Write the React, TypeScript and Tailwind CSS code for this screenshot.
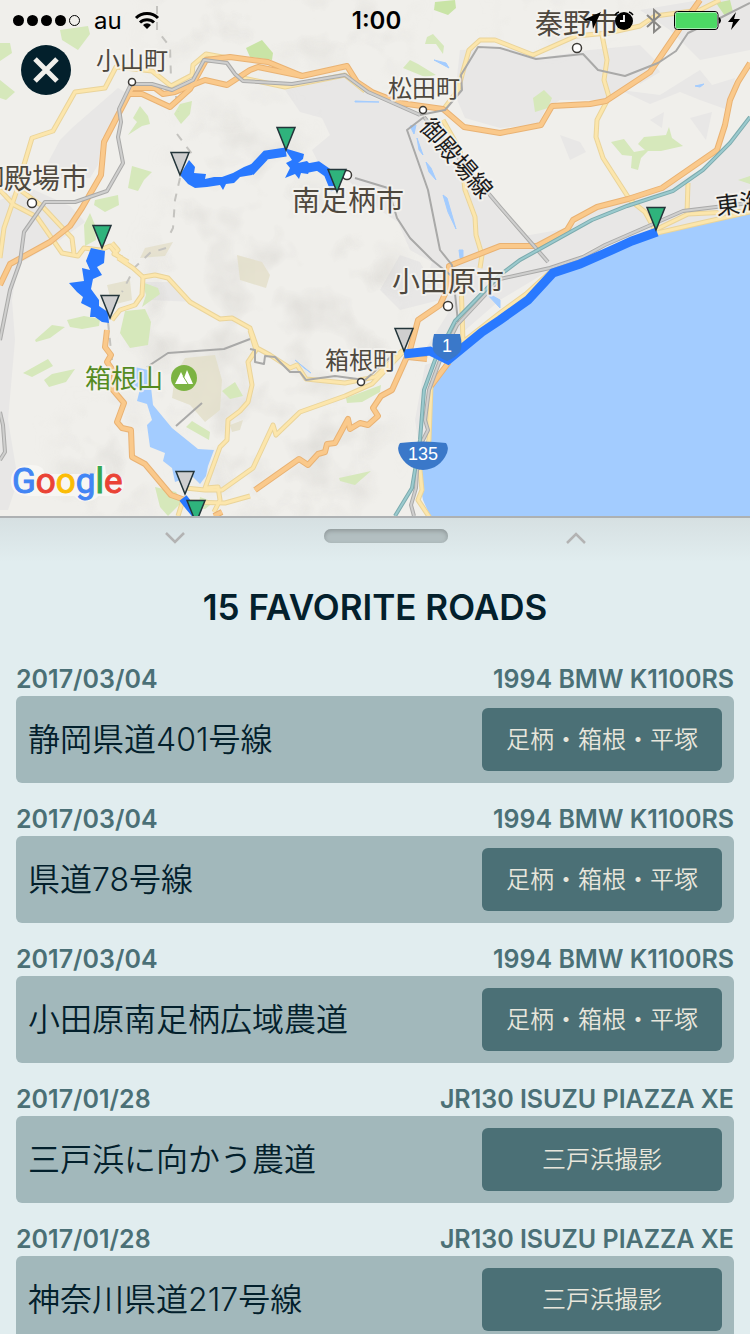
import { useState } from "react";

const roads = [
    { id: 1, date: "2017/03/04", vehicle: "1994 BMW K1100RS", name: "静岡県道401号線", trip: "足柄・箱根・平塚" },
    { id: 2, date: "2017/03/04", vehicle: "1994 BMW K1100RS", name: "県道78号線", trip: "足柄・箱根・平塚" },
    { id: 3, date: "2017/03/04", vehicle: "1994 BMW K1100RS", name: "小田原南足柄広域農道", trip: "足柄・箱根・平塚" },
    { id: 4, date: "2017/01/28", vehicle: "JR130 ISUZU PIAZZA XE", name: "三戸浜に向かう農道", trip: "三戸浜撮影" },
    { id: 5, date: "2017/01/28", vehicle: "JR130 ISUZU PIAZZA XE", name: "神奈川県道217号線", trip: "三戸浜撮影" },
];

const urban = [
    "M285 90 345 77 372 97 425 118 470 168 502 214 548 262 500 280 455 310 440 300 425 285 432 262 410 250 398 222 372 205 350 182 322 170 312 150 330 135 322 118 300 112z",
    "M118 88 130 95 122 112 102 138 98 165 90 178 60 178 44 170 60 140 72 128z",
    "M0 200 30 188 70 206 85 222 60 240 22 262 0 290z",
    "M0 260 18 262 12 300 15 340 8 420 18 480 8 510 0 510z",
    "M460 50 520 48 540 58 590 50 640 45 655 60 630 85 605 100 560 100 545 110 538 125 500 128 465 118 455 95z",
    "M620 90 660 95 700 70 712 85 735 78 728 110 700 100 680 92 650 104z",
    "M560 135 580 142 586 152 570 160z M650 120 664 112 662 128z M690 118 712 112 706 140z M630 62 650 58 660 72 640 84z",
    "M500 240 570 228 600 205 660 190 705 168 750 120 750 214 655 232 600 245 550 270 500 300 440 352 425 350 450 310z",
    "M195 302 150 300 145 282 168 282z M400 255 420 262 440 300 400 310 380 290z M425 365 440 360 428 420 420 450 415 420z",
    "M640 10 700 0 750 0 750 50 700 60 670 30z",
];

const greens = [
    "M60 30 88 26 90 34 78 50 62 40z M0 43 10 43 12 53 0 61z M0 80 15 92 6 100 0 98z",
    "M140 106 148 116 150 124 142 126 128 135 137 122 133 118z M180 104 192 101 190 114 181 124 174 114z",
    "M132 166 152 172 144 180 138 191 128 188z M95 200 118 195 119 205 105 212 94 205z M90 213 95 225 96 240 85 246 84 225z",
    "M427 37 433 34 444 46 443 54 436 44 425 44z",
    "M410 60 418 64 436 75 425 77 403 68z M533 98 544 90 552 98 548 108 535 112z",
    "M611 142 624 139 634 152 645 150 638 144 644 137 666 135 669 127 672 138 683 146 661 151 648 151 641 158 638 170 631 168 632 156 622 155z M738 180 750 176 750 184z",
    "M125 311 145 309 151 322 148 345 130 348 120 333z M67 320 84 316 100 319 99 326 82 329 70 327z M35 340 52 325 65 327 50 338 36 342z",
    "M23 373 48 359 53 366 32 377z M44 380 52 374 75 369 66 382 49 387z M142 282 158 288 160 294 142 307 146 295z",
    "M186 427 192 421 210 432 209 440z M222 391 235 382 243 396 230 399z M346 398 381 385 380 392 362 402 347 403z M339 478 371 471 355 485 340 481z",
    "M155 487 176 492 182 502 168 516 160 507z M200 497 214 502 205 509 198 508z",
];

const lake = "M130 366 148 370 151 387 153 405 172 428 198 449 214 450 208 466 206 476 200 484 192 476 175 482 172 468 163 461 165 453 150 447 147 425 152 420 147 404 137 401 140 389 130 386z";
const sea = "M750 213 657 234 603 256 553 277 530 302 500 324 448 362 431 386 430 436 421 456 419 480 423 500 430 516 750 516z";
const streams = "M410 126 416 125 414 134z M417 138 423 155 419 150z M426 162 431 168 436 180 429 172z M443 195 447 198 456 229 448 212z M434 60 446 63 449 68z M355 101 379 102 355 102z M459 250 463 250 463 260 460 258z M484 291 500 300 500 308z M695 86 704 84 700 87z M295 360 311 373 304 368z";

const yellowRoads = [
    "M0 258 4 228 17 190 23 168 32 138 53 131 75 92 105 88 116 67 152 71 171 86 192 75 193 65 206 54 228 58",
    "M243 78 285 87 345 75 365 91",
    "M0 190 14 205 37 217 62 253 78 256 84 248 100 250 110 246 118 256 128 262",
    "M20 190 42 206 72 238 74 254 M112 243 118 250 114 254 122 258",
    "M443 110 458 90 462 75 469 50 480 40 495 40 533 55 576 36 608 33 640 26 655 16 700 10 720 0",
    "M602 35 607 60 604 80 609 97 597 120 596 137 603 158 630 200 645 212 655 230",
    "M443 120 460 150 465 190 475 217 476 235 482 255 480 268",
    "M461 280 463 342 500 313 526 294 550 272",
    "M655 230 688 214 750 211 M657 233 705 222 750 212 M688 183 687 213",
    "M118 258 133 268 143 277 155 275 168 278 190 302 220 319 232 318 250 328 257 348 270 355 290 368 297 365 306 379 345 383 375 377 403 350",
    "M143 277 142 295 135 305 120 310 112 320",
    "M403 352 372 384 345 396 300 412 276 435 273 425 253 468 222 490 205 490 185 488",
    "M250 330 256 350 248 362 252 385 248 402 240 411 228 420 227 440 220 447 205 488 218 487 220 500 214 512",
    "M188 502 225 503 250 496 M183 500 178 516",
    "M431 386 429 440 420 470 422 490 418 500 430 518",
];

const orangeRoads = [
    "M0 285 10 264 50 242 70 226 82 208 101 175 104 142 118 115 132 88 155 88 163 94 175 92 205 80 227 85 250 70 258 67 302 76 347 66 357 82 372 92 400 103 443 109 464 127 500 133 541 125 552 106 590 104 606 101 650 72 680 28 700 0",
    "M130 94 142 94 170 107 190 89 206 60 230 57 268 62 302 76",
    "M255 490 299 459 308 465 318 454 325 452 327 444 335 443 348 419 350 429 360 423 368 425 378 416 373 408 381 396 392 390 410 350 418 320 440 305 449 285 449 266 500 246 537 246 567 230 573 220 597 207 628 199 662 188 717 150 725 125 730 100 738 82 750 63",
    "M408 357 427 359 M449 362 431 386",
    "M107 330 105 347 111 355 107 362 114 372 113 390 124 403 117 422 122 428 131 430 132 457 145 464 171 495 185 500 M222 512 214 516",
];

const rails = [
    "M0 340 10 290 20 262 24 232 45 202 75 202 107 191 123 163 118 137 121 122 119 109 131 84 152 84 172 90 193 80 204 60 227 63 235 74 243 81 292 84 345 75 368 92 420 115",
    "M424 117 500 207 548 262",
    "M750 203 716 207 683 211 605 245 583 257 550 268 500 279 457 325 442 355 429 390 425 420 428 430 422 442 427 455 417 470 416 488 411 505 414 516",
    "M0 412 3 425 5 452 0 460",
];

const thinRails = [
    "M420 115 445 110 462 90 461 75 478 47 500 48 536 59 583 54 598 70 625 76 658 63 676 51 688 33 722 17 750 3",
    "M424 117 407 130 428 190 440 250 452 265 458 322",
    "M355 178 388 188 397 218 410 238 432 260 454 278",
    "M147 367 168 353 224 349 250 339",
    "M250 349 255 350 255 362 264 364 265 356 275 357 290 372 300 372 306 380 335 376 365 380 385 362 396 352",
    "M176 426 202 403",
];

const coastLine = "M750 117 730 143 703 170 673 191 627 206 592 220 520 260 500 275 455 321 435 360 424 390 420 440 412 488 395 516";

const border = "M157 6 157 30 170 47 171 78 M176 96 178 112 M177 134 192 154 M180 178 175 200 173 228 167 240 M166 248 150 253 135 267 122 292 M108 322 112 360";

const pins = [
    { x: 180, y: 175, color: "#cfcfcf" },
    { x: 286, y: 150, color: "#2fb37c" },
    { x: 337, y: 192, color: "#2fb37c" },
    { x: 102, y: 248, color: "#2fb37c" },
    { x: 110, y: 318, color: "#cfcfcf" },
    { x: 404, y: 351, color: "#cfcfcf" },
    { x: 656, y: 230, color: "#2fb37c" },
    { x: 185, y: 494, color: "#cfcfcf" },
    { x: 196, y: 523, color: "#2fb37c" },
];

const towns = [
    { name: "小山町", x: 132, y: 69, size: 24, dotX: 132, dotY: 82, r: 3.5 },
    { name: "松田町", x: 424, y: 97, size: 24, dotX: 423, dotY: 110, r: 3.5 },
    { name: "箱根町", x: 361, y: 369, size: 24, dotX: 361, dotY: 382, r: 3.5 },
    { name: "南足柄市", x: 348, y: 211, size: 28, dotX: 347, dotY: 175, r: 4.5 },
    { name: "秦野市", x: 577, y: 34, size: 28, dotX: 577, dotY: 48, r: 4.5 },
    { name: "御殿場市", x: 32, y: 189, size: 28, dotX: 32, dotY: 203, r: 4.5 },
    { name: "小田原市", x: 448, y: 292, size: 28, dotX: 448, dotY: 306, r: 4.5 },
];

function Lines({ paths, color, width }: { paths: string[], color: string, width: number }) {
    return (
        <g fill="none" stroke={color} strokeWidth={width} strokeLinejoin="round">
            {paths.map((d) => <path key={d} d={d} />)}
        </g>
    );
}

function RoadMap() {
    return (
        <svg className="block w-full h-[516px] font-['Noto_Sans_CJK_JP',sans-serif]" viewBox="0 0 750 516" preserveAspectRatio="xMidYMid slice" role="img" aria-label="Map">
            <defs>
                <filter id="relief" x="0" y="0" width="100%" height="100%" colorInterpolationFilters="sRGB">
                    <feTurbulence type="fractalNoise" baseFrequency="0.024" numOctaves="3" seed="8" />
                    <feColorMatrix values="0 0 0 0 0.8  0 0 0 0 0.79  0 0 0 0 0.77  2.4 0 0 0 -1.1" />
                </filter>
                <filter id="soft"><feGaussianBlur stdDeviation="14" /></filter>
                <mask id="hills">
                    <g fill="#fff" filter="url(#soft)">
                        <path d="M150 0 410 0 400 70 340 60 200 50 150 60z" />
                        <path d="M190 110 270 100 310 130 300 180 400 260 390 330 400 370 370 516 230 516 130 340 160 230z" />
                        <path d="M60 420 130 400 150 516 60 516z" />
                        <path d="M500 0 640 0 600 30 500 40z" />
                    </g>
                </mask>
            </defs>
            <rect width="750" height="516" fill="#f0efeb" />
            <g fill="#e8e7e6">{urban.map((d) => <path key={d} d={d} />)}</g>
            <g mask="url(#hills)"><rect width="750" height="516" filter="url(#relief)" opacity="0.4" /></g>
            <g fill="#e3dfc9" opacity="0.8">
                <path d="M185 358 215 355 222 380 220 410 205 422 190 405 172 398 175 375z" />
                <path d="M237 255 262 262 270 275 266 288 240 280z M107 285 130 280 132 300 112 305z M230 425 243 420 240 430 232 432z M145 248 173 242 165 256 140 258z" />
            </g>
            <g fill="#d6e8bb">{greens.map((d) => <path key={d} d={d} />)}</g>
            <path d="M246 48 262 40 273 53 272 60 250 57z M435 2 455 0 456 8 448 15 434 10z M716 3 730 0 733 12 725 16z" fill="#c9e4a6" />
            <path d={sea} fill="#a3ccff" />
            <path d={lake} fill="#a3ccff" />
            <path d={streams} fill="#a3ccff" stroke="#a3ccff" />
            <path d={border} fill="none" stroke="#c4c3bf" strokeWidth="2" strokeDasharray="8 8" />
            <Lines paths={yellowRoads} color="#ead49a" width={5} />
            <Lines paths={yellowRoads} color="#fce6ac" width={3} />
            <Lines paths={orangeRoads} color="#e9b273" width={6} />
            <Lines paths={orangeRoads} color="#fac98b" width={4} />
            <Lines paths={rails} color="#aaaaa9" width={4} />
            <Lines paths={rails} color="#cfcfce" width={2} />
            <Lines paths={thinRails} color="#a9a9a8" width={2} />
            <path d={coastLine} fill="none" stroke="#7cabae" strokeWidth="4" />
            <path d={coastLine} fill="none" stroke="#9bcace" strokeWidth="2" />
            <g fill="none" stroke="#2979ff" strokeWidth="9">
                <path d="M657 232 632 241 603 254 580 264 553 273 528 300 500 320 482 332 448 360 430 351 404 354" />
                <path d="M183 498 190 507 196 514" />
                <path d="M250 172 266 155 286 152" />
                <path d="M308 168 318 166 328 173 335 190" />
            </g>
            <g fill="#2979ff">
                <path d="M189 160 195 167 194 173 206 174 205 179 214 177 222 177 233 173 244 167 254 163 266 155 263 164 252 175 240 177 234 183 226 184 223 190 220 185 207 187 195 188 188 184 180 175z" />
                <path d="M284 148 304 154 303 159 298 163 307 161 312 166 308 174 301 173 299 179 295 174 285 178 290 168 286 163 292 160z" />
                <path d="M91 248 105 251 104 263 97 267 102 275 93 279 91 289 99 300 99 306 108 312 109 323 102 322 95 317 90 317 91 308 81 303 83 297 77 292 69 283 84 281 82 268 90 270 86 261z" />
            </g>
            <g fill="#4e483e" textAnchor="middle" stroke="#f5f4f0" strokeWidth="4" strokeOpacity="0.8" strokeLinejoin="round" paintOrder="stroke">
                {towns.map((town) => (
                    <text key={town.name} x={town.x} y={town.y} fontSize={town.size}>{town.name}</text>
                ))}
                <text x="124" y="388" fontSize="26" fill="#558b1f">箱根山</text>
                <text fontSize="24" fill="#1c1c1c" transform="translate(450 164) rotate(49)">御殿場線</text>
                <text fontSize="24" fill="#1c1c1c" transform="translate(717 215) rotate(-7)" textAnchor="start">東海道本線</text>
            </g>
            {towns.map((town) => (
                <circle key={town.name} cx={town.dotX} cy={town.dotY} r={town.r} fill="#fff" stroke="#3c3a36" strokeWidth="1.5" />
            ))}
            <circle cx="184" cy="378" r="13" fill="#7cb342" />
            <path d="M175 384 181 372 184 378 187 370 193 384z" fill="#fff" />
            <path d="M183 376 188 384" stroke="#7cb342" strokeWidth="1" />
            <g fontSize="18" fill="#fff" textAnchor="middle" className="font-['Liberation_Sans',sans-serif]">
                <path d="M434 334 460 334 Q463 346 460 352 Q455 358 447 361 Q439 358 434 352 Q431 346 434 334z" fill="#3a78c9" />
                <text x="447" y="352">1</text>
                <path d="M400 443 Q423 440 446 443 Q449 447 447 453 Q440 469 423 470 Q406 469 399 453 Q397 447 400 443z" fill="#3a78c9" />
                <text x="423" y="460">135</text>
            </g>
            {pins.map((pin) => (
                <path key={`${pin.x}-${pin.y}`} d="M-9 -22.5 9 -22.5 0 0z" transform={`translate(${pin.x} ${pin.y})`} fill={pin.color} stroke="#23353a" strokeWidth="1.5" />
            ))}
            <path d="M30 465 Q45 465 44 474 L95 474 97 465 105 465 106 474 Q124 474 124 484 Q124 496 108 496 L98 496 Q94 503 80 501 L74 496 30 496 Q11 496 11 481 Q11 465 30 465z" fill="#f7f6f3" />
            <text x="12" y="493" fontSize="35" strokeWidth="1" className="font-['Roboto',sans-serif] font-normal">
                <tspan fill="#4285f4" stroke="#4285f4">G</tspan>
                <tspan fill="#ea4335" stroke="#ea4335">o</tspan>
                <tspan fill="#fbbc05" stroke="#fbbc05">o</tspan>
                <tspan fill="#4285f4" stroke="#4285f4">g</tspan>
                <tspan fill="#34a853" stroke="#34a853">l</tspan>
                <tspan fill="#ea4335" stroke="#ea4335">e</tspan>
            </text>
        </svg>
    );
}

function StatusBar() {
    return (
        <div className="absolute inset-x-0 top-0 grid grid-cols-3 items-center h-[42px] pl-3 pr-[9px] text-2xl text-black">
            <div className="flex items-center gap-3">
                <svg width="70" height="14" viewBox="0 0 70 14" aria-hidden="true">
                    <circle cx="6.5" cy="6.5" r="5.5" />
                    <circle cx="20.5" cy="6.5" r="5.5" />
                    <circle cx="34.5" cy="6.5" r="5.5" />
                    <circle cx="48.5" cy="6.5" r="5.5" />
                    <circle cx="62.5" cy="6.5" r="5" fill="none" stroke="#000" />
                </svg>
                <span>au</span>
                <svg width="26" height="20" viewBox="0 0 26 20" fill="none" stroke="#000" strokeWidth="3" aria-hidden="true">
                    <path d="M2 7a15.5 15.5 0 0 1 22 0" />
                    <path d="M6 11.5a10 10 0 0 1 14 0" />
                    <path d="M13 18l-4-4a5.7 5.7 0 0 1 8 0z" fill="#000" stroke="none" />
                </svg>
            </div>
            <span className="text-center font-semibold">1:00</span>
            <div className="flex items-center justify-end">
                <svg width="20" height="20" viewBox="0 0 20 20" aria-hidden="true"><path d="M19 1 11 18 10 10 1 9z" /></svg>
                <svg className="ml-3" width="20" height="20" viewBox="0 0 20 20" aria-hidden="true">
                    <circle cx="10" cy="10" r="9" />
                    <path d="M1 4a8 8 0 0 1 4-3M15 1a8 8 0 0 1 4 3" fill="none" stroke="#000" strokeWidth="1.5" />
                    <path d="M10 4v6H6" fill="none" stroke="#fff" strokeWidth="1.8" />
                </svg>
                <svg className="ml-3" width="16" height="26" viewBox="0 0 16 26" fill="none" stroke="#8a8986" strokeWidth="2" aria-hidden="true">
                    <path d="M1 7l13 12-6 5V2l6 5L1 19" />
                </svg>
                <svg className="ml-3" width="49" height="20" viewBox="0 0 49 20" aria-hidden="true">
                    <rect x="0.5" y="0.5" width="43.5" height="18" rx="3" fill="#fff" stroke="#000" />
                    <rect x="1.5" y="1.5" width="41.5" height="16" rx="2" fill="#4cd964" />
                    <path d="M45 6q4 3.5 0 7z" />
                </svg>
                <svg className="ml-1" width="14" height="20" viewBox="0 0 14 20" aria-hidden="true"><path d="M9 1 1 11h5L4 19l9-11H7z" /></svg>
            </div>
        </div>
    );
}

function App() {
    const [selected, setSelected] = useState<number | null>(null);

    return (
        <div className="flex flex-col h-screen overflow-hidden bg-[#e1edef] text-[#03202c] font-['Inter','Noto_Sans_CJK_JP',sans-serif]">
            <div className="relative shrink-0 border-b-2 border-[#adb1b3]">
                <RoadMap />
                <StatusBar />
                <button aria-label="Close" className="absolute left-[21px] top-[45px] flex items-center justify-center size-[50px] rounded-full bg-[#03202c]">
                    <svg width="26" height="26" viewBox="0 0 26 26" stroke="#f0efeb" strokeWidth="5" aria-hidden="true">
                        <path d="M2 2l22 22M24 2 2 24" />
                    </svg>
                </button>
            </div>

            <div className="flex shrink-0 items-start justify-center h-11 pt-[11px] bg-linear-to-b from-[#d6e0e2] to-[#e1edef]">
                <button aria-label="Collapse list" className="pt-[3px]">
                    <svg width="20" height="12" viewBox="0 0 20 12" fill="none" stroke="#b3b3b3" strokeWidth="2.5" aria-hidden="true"><path d="M1 1l9 9 9-9" /></svg>
                </button>
                <div className="ml-[139px] mr-[118px] w-[124px] h-[14px] rounded-full bg-[#b3bfc1] shadow-[inset_0_2px_4px_#8f9899]"></div>
                <button aria-label="Expand list" className="pt-[3px]">
                    <svg width="20" height="12" viewBox="0 0 20 12" fill="none" stroke="#b3b3b3" strokeWidth="2.5" aria-hidden="true"><path d="M1 11l9-9 9 9" /></svg>
                </button>
            </div>

            <main className="flex-1 min-h-0 overflow-y-auto [scrollbar-width:none] px-4">
                <h1 className="pt-5 text-center text-[35px] leading-[50px] font-semibold">15 FAVORITE ROADS</h1>
                <ul className="flex flex-col gap-[19px] pt-[30px]">
                    {roads.map((road) => (
                        <li key={road.id}>
                            <div className="flex justify-between text-[25px] leading-[34px] font-semibold text-[#4b7076]">
                                <span>{road.date}</span>
                                <span>{road.vehicle}</span>
                            </div>
                            <div className="flex items-center justify-between h-[87px] p-3 rounded-md bg-[#a2b8bb]">
                                <span className="text-[32px] font-[350]">{road.name}</span>
                                <button
                                    className={`w-60 h-full rounded-md text-2xl font-[350] text-[#e8e6dc] ${selected === road.id ? 'bg-[#3b5c61]' : 'bg-[#4b7076]'}`}
                                    onClick={() => setSelected(road.id)}
                                >
                                    {road.trip}
                                </button>
                            </div>
                        </li>
                    ))}
                </ul>
            </main>
        </div>
    );
}

export default App;
